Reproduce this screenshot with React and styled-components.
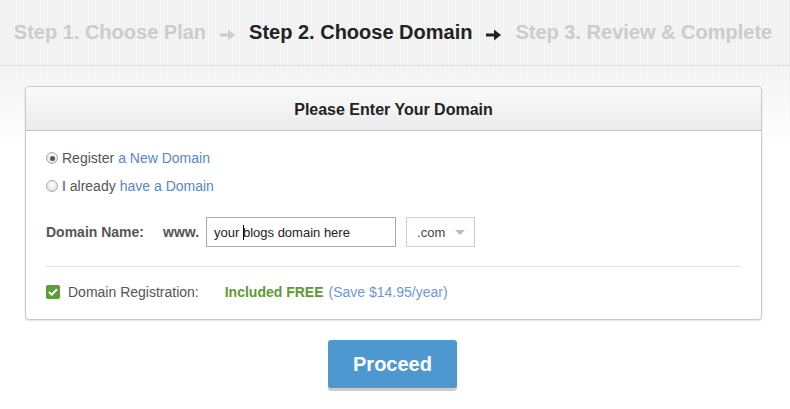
import React from 'react';
import styled, { createGlobalStyle } from 'styled-components';

const GlobalStyle = createGlobalStyle`
  html, body {
    margin: 0;
    padding: 0;
    background: #fff;
  }
  body {
    font-family: "Liberation Sans", Arial, sans-serif;
  }
`;

const stripes = `repeating-linear-gradient(90deg, #eeeeee 0px, #eeeeee 1px, #f5f5f5 1px, #f5f5f5 3px)`;

const Page = styled.div`
  width: 790px;
  height: 409px;
  overflow: hidden;
  background: linear-gradient(to bottom, rgba(255,255,255,0) 60px, #fff 150px), ${stripes};
`;

const StepBar = styled.div`
  height: 65px;
  border-bottom: 1px solid #dcdcdc;
  display: flex;
  align-items: center;
  justify-content: center;
  gap: 14px;
  padding-right: 4px;
  background: ${stripes};
`;

const Step = styled.span`
  font-size: 20px;
  font-weight: bold;
  color: ${p => (p.$active ? '#222' : '#cccccc')};
  white-space: nowrap;
`;

const Arrow = styled.svg`
  width: 15px;
  height: 12px;
  margin-top: 4px;
  fill: ${p => p.$color};
`;

const Card = styled.div`
  width: 735px;
  margin: 20px 0 0 25px;
  background: #fff;
  border: 1px solid #c9c9c9;
  border-radius: 4px;
  box-shadow: 0 1px 2px rgba(0,0,0,0.12);
`;

const CardHeader = styled.div`
  height: 44px;
  padding-top: 2px;
  box-sizing: border-box;
  display: flex;
  align-items: center;
  justify-content: center;
  background: linear-gradient(to bottom, #fbfbfb, #ebebeb);
  border-bottom: 1px solid #c4c4c4;
  border-radius: 4px 4px 0 0;
  font-size: 16px;
  font-weight: bold;
  color: #222;
`;

const CardBody = styled.div`
  padding: 13px 20px 14px 20px;
`;

const OptionRow = styled.label`
  display: flex;
  align-items: center;
  height: 28px;
  font-size: 14px;
  color: #555;
`;

const Radio = styled.span`
  width: 10px;
  height: 10px;
  border-radius: 50%;
  border: 1px solid #a9a9a9;
  background: radial-gradient(circle at 50% 35%, #fdfdfd, #dcdcdc);
  margin: 0 4px 0 0;
  display: flex;
  align-items: center;
  justify-content: center;
  &::after {
    content: '';
    display: ${p => (p.$checked ? 'block' : 'none')};
    width: 5px;
    height: 5px;
    border-radius: 50%;
    background: #555;
  }
`;

const Link = styled.span`
  color: #5a86c8;
  margin-left: 4px;
`;

const DomainRow = styled.div`
  display: flex;
  align-items: center;
  margin-top: 17px;
  height: 30px;
`;

const Label = styled.span`
  font-size: 14px;
  font-weight: bold;
  color: #555;
  width: ${p => p.$width || 'auto'};
`;

const FakeInput = styled.div`
  width: 190px;
  height: 30px;
  border: 1px solid #a9a9a9;
  display: flex;
  align-items: center;
  padding-left: 7px;
  box-sizing: border-box;
  font-size: 13px;
  color: #222;
  margin-left: 7px;
  white-space: pre;
`;

const Caret = styled.span`
  display: inline-block;
  width: 1px;
  height: 15px;
  background: #000;
  margin-right: -1px;
`;

const Select = styled.div`
  width: 69px;
  height: 30px;
  border: 1px solid #cfcfcf;
  margin-left: 10px;
  display: flex;
  align-items: center;
  padding-left: 10px;
  box-sizing: border-box;
  font-size: 13px;
  color: #444;
  gap: 10px;
`;

const Triangle = styled.span`
  width: 0;
  height: 0;
  border-left: 5px solid transparent;
  border-right: 5px solid transparent;
  border-top: 5px solid #bbb;
`;

const Divider = styled.div`
  height: 1px;
  background: #e3e3e3;
  margin: 19px 0 0 0;
`;

const RegRow = styled.div`
  display: flex;
  align-items: center;
  margin-top: 12px;
  height: 26px;
  font-size: 14px;
  color: #555;
`;

const Check = styled.span`
  width: 14px;
  height: 14px;
  border-radius: 2px;
  background: #5a9e3a;
  display: flex;
  align-items: center;
  justify-content: center;
  margin-right: 8px;
`;

const Free = styled.span`
  color: #5d9a36;
  font-weight: bold;
  margin-left: 26px;
`;

const Save = styled.span`
  color: #6f96d6;
  margin-left: 5px;
`;

const ButtonWrap = styled.div`
  display: flex;
  justify-content: center;
  margin-top: 20px;
  padding-right: 5px;
`;

const Button = styled.button`
  width: 129px;
  height: 48px;
  border: none;
  border-radius: 3px;
  background: #4e98d1;
  color: #fff;
  font-family: "Liberation Sans", Arial, sans-serif;
  font-size: 20px;
  font-weight: bold;
  box-shadow: 0 3px 0 #cccccc;
  cursor: pointer;
`;

function StepArrow({ color }) {
  return (
    <Arrow viewBox="0 0 15 12" $color={color}>
      <path d="M0 4.5h8V0.5L15 6l-7 5.5V7.5H0z" />
    </Arrow>
  );
}

export default function App() {
  return (
    <Page>
      <GlobalStyle />
      <StepBar>
        <Step>Step 1. Choose Plan</Step>
        <StepArrow color="#cccccc" />
        <Step $active>Step 2. Choose Domain</Step>
        <StepArrow color="#222" />
        <Step>Step 3. Review &amp; Complete</Step>
      </StepBar>

      <Card>
        <CardHeader>Please Enter Your Domain</CardHeader>
        <CardBody>
          <OptionRow>
            <Radio $checked />
            Register<Link>a New Domain</Link>
          </OptionRow>
          <OptionRow>
            <Radio />
            I already<Link>have a Domain</Link>
          </OptionRow>

          <DomainRow>
            <Label $width="117px">Domain Name:</Label>
            <Label>www.</Label>
            <FakeInput>
              your <Caret />blogs domain here
            </FakeInput>
            <Select>
              .com
              <Triangle />
            </Select>
          </DomainRow>

          <Divider />

          <RegRow>
            <Check>
              <svg width="10" height="8" viewBox="0 0 10 8">
                <path d="M1 4l2.7 2.7L9 1.3" fill="none" stroke="#fff" strokeWidth="2" />
              </svg>
            </Check>
            Domain Registration:
            <Free>Included FREE</Free>
            <Save>(Save $14.95/year)</Save>
          </RegRow>
        </CardBody>
      </Card>

      <ButtonWrap>
        <Button>Proceed</Button>
      </ButtonWrap>
    </Page>
  );
}
